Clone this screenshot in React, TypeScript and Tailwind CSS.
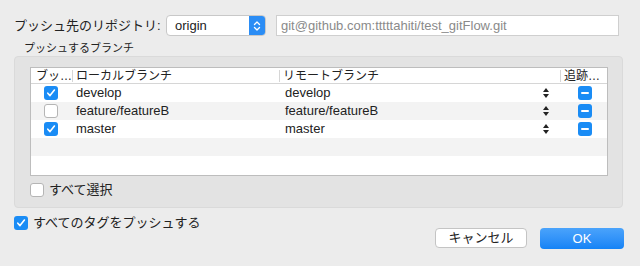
import React from "react";

const font = { fontFamily: '"Liberation Sans", "Noto Sans CJK JP", sans-serif' };

function Check({ checked }: { checked: boolean }) {
  if (checked) {
    return (
      <div className="w-[14px] h-[14px] rounded-[3px] bg-[#1a8cf5] flex items-center justify-center">
        <svg width="10" height="10" viewBox="0 0 10 10">
          <path d="M1.8 5.2 L4 7.6 L8.4 2" fill="none" stroke="white" strokeWidth="1.6" strokeLinecap="round" strokeLinejoin="round" />
        </svg>
      </div>
    );
  }
  return <div className="w-[14px] h-[14px] rounded-[3px] bg-white border border-[#b5b5b5]" />;
}

function Stepper() {
  return (
    <svg width="6" height="12" viewBox="0 0 6 12">
      <path d="M3 1 L6 5 L0 5 Z" fill="#222" />
      <path d="M3 11 L6 7 L0 7 Z" fill="#222" />
    </svg>
  );
}

function Minus() {
  return (
    <div className="w-[14px] h-[14px] rounded-[3px] bg-[#1a8cf5] flex items-center justify-center">
      <div className="w-[8px] h-[2px] bg-white rounded-[1px]" />
    </div>
  );
}

const rows = [
  { c: true, l: "develop", r: "develop" },
  { c: false, l: "feature/featureB", r: "feature/featureB" },
  { c: true, l: "master", r: "master" },
];

export default function App() {
  return (
    <div className="w-[640px] h-[266px] bg-[#ececec] text-[#222] text-[13px] overflow-hidden" style={font}>
      <div className="flex items-center pt-[15px] pl-[14px]">
        <div className="w-[152px] leading-[21px]">プッシュ先のリポジトリ:</div>
        <div className="w-[100px] h-[21px] bg-white border border-[#c8c8c8] rounded-[4px] flex overflow-hidden">
          <div className="flex-1 pl-[8px] leading-[19px]">origin</div>
          <div className="w-[16px] bg-[#2b8df5] flex items-center justify-center">
            <svg width="8" height="12" viewBox="0 0 8 12">
              <path d="M1.5 4.5 L4 2 L6.5 4.5 M1.5 7.5 L4 10 L6.5 7.5" fill="none" stroke="white" strokeWidth="1.3" strokeLinecap="round" strokeLinejoin="round" />
            </svg>
          </div>
        </div>
        <div className="ml-[10px] w-[343px] h-[21px] bg-white border border-[#cfcfcf] pl-[4px] leading-[19px] text-[#8a8a8a]">
          git@github.com:tttttahiti/test_gitFlow.git
        </div>
      </div>
      <div className="pl-[24px] mt-[5px] text-[11px] leading-[14px]">プッシュするブランチ</div>
      <div className="ml-[14px] mt-[1px] w-[609px] h-[152px] bg-[#e3e3e3] border border-[#dadada] rounded-[4px] pt-[10px] pl-[15px]">
        <div className="w-[578px] h-[109px] bg-white border border-[#bdbdbd] flex flex-col">
          <div className="h-[16px] flex items-center border-b border-[#d6d6d6] text-[12px]">
            <div className="w-[42px] pl-[5px] border-r border-[#d6d6d6] leading-[12px]">ブッ…</div>
            <div className="w-[207px] pl-[3px] border-r border-[#d6d6d6] leading-[12px]">ローカルブランチ</div>
            <div className="w-[281px] pl-[3px] border-r border-[#d6d6d6] leading-[12px]">リモートブランチ</div>
            <div className="flex-1 pl-[3px] leading-[12px]">追跡…</div>
          </div>
          {rows.map((r, i) => (
            <div key={i} className={`h-[18px] flex items-center ${i % 2 === 1 ? "bg-[#f3f3f3]" : "bg-white"}`}>
              <div className="w-[42px] pl-[13px]"><Check checked={r.c} /></div>
              <div className="w-[208px] pl-[3px]">{r.l}</div>
              <div className="w-[262px] pl-[4px]">{r.r}</div>
              <div className="w-[6px] flex"><Stepper /></div>
              <div className="pl-[29px]"><Minus /></div>
            </div>
          ))}
          <div className="h-[18px] bg-[#f3f3f3]" />
          <div className="flex-1 bg-white" />
        </div>
        <div className="flex items-center mt-[7px]">
          <Check checked={false} />
          <span className="ml-[5px] leading-[14px]">すべて選択</span>
        </div>
      </div>
      <div className="flex items-start pl-[14px] mt-[8px]">
        <div className="flex items-center">
          <Check checked={true} />
          <span className="ml-[5px] leading-[14px]">すべてのタグをプッシュする</span>
        </div>
      </div>
      <div className="flex justify-end pr-[16px] -mt-[2px] gap-[13px]">
        <div className="w-[92px] h-[20px] bg-white border border-[#c4c4c4] rounded-[4px] flex items-center justify-center leading-[18px]">キャンセル</div>
        <div className="w-[84px] h-[21px] bg-[#2d8ff7] rounded-[4px] flex items-center justify-center text-white bg-gradient-to-b from-[#4aa3fb] to-[#1383f6]">OK</div>
      </div>
    </div>
  );
}
